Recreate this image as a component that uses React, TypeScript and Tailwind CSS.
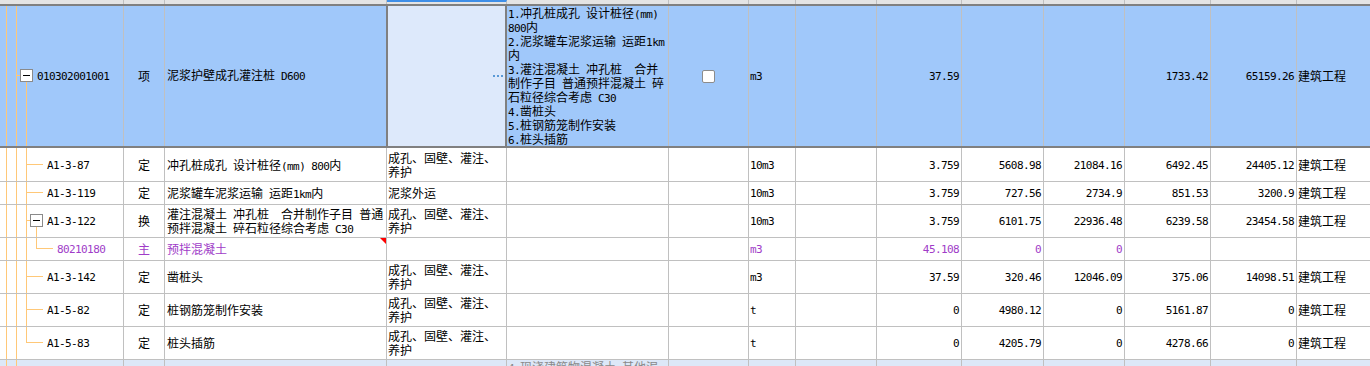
import React from "react";

const ASCII = "[font-family:'DejaVu_Sans_Mono',monospace] text-[11px] tracking-[-0.6px]";

const W = [
  "w-[124px]",
  "w-[41px]",
  "w-[222px]",
  "w-[120px]",
  "w-[162px]",
  "w-[80px]",
  "w-[47px]",
  "w-[81px]",
  "w-[85px]",
  "w-[82px]",
  "w-[81px]",
  "w-[86px]",
  "w-[86px]",
  "flex-1",
];

function T({ s }: { s: string }) {
  const parts = s.match(/[\x20-\x7e]+|[^\x20-\x7e]+/g) || [];
  return (
    <span className="whitespace-pre">
      {parts.map((p, i) =>
        /^[\x20-\x7e]/.test(p) ? (
          <span key={i} className={ASCII}>
            {p}
          </span>
        ) : (
          <span key={i}>{p}</span>
        )
      )}
    </span>
  );
}

function Lines({ lines }: { lines: string[] }) {
  return (
    <div className="flex flex-col">
      {lines.map((l, i) => (
        <div key={i} className="whitespace-pre h-[14px] leading-[14px]">
          <T s={l} />
        </div>
      ))}
    </div>
  );
}

type TK = "root" | "child" | "last" | "parent" | "sub" | "none";

function Tree({ kind, h, w }: { kind: TK; h: number; w: number }) {
  const m = Math.floor((h - 1) / 2) + 0.5;
  const O = "#ffc878";
  const els: React.ReactNode[] = [];
  const L = (x1: number, y1: number, x2: number, y2: number, c: string = O) =>
    els.push(
      <line
        key={els.length}
        x1={x1}
        y1={y1}
        x2={x2}
        y2={y2}
        stroke={c}
        strokeWidth={1}
        shapeRendering="crispEdges"
      />
    );
  const box = (x: number) => {
    els.push(
      <rect
        key={els.length}
        x={x + 0.5}
        y={m - 6}
        width={12}
        height={12}
        fill="#ffffff"
        stroke="#8a8a8a"
        shapeRendering="crispEdges"
      />
    );
    L(x + 3, m, x + 10, m, "#000000");
  };
  L(6.5, 0, 6.5, h);
  L(16.5, 0, 16.5, h);
  if (kind === "root") {
    L(16, m, 20, m);
    L(26.5, m + 6.5, 26.5, h);
    box(20);
  } else if (kind === "child") {
    L(26.5, 0, 26.5, h);
    L(26, m, 43, m);
  } else if (kind === "last") {
    L(26.5, 0, 26.5, m);
    L(26, m, 43, m);
  } else if (kind === "parent") {
    L(26.5, 0, 26.5, h);
    L(26, m, 30, m);
    L(36.5, m + 6.5, 36.5, h);
    box(30);
  } else if (kind === "sub") {
    L(26.5, 0, 26.5, h);
    L(36.5, 0, 36.5, m);
    L(36, m, 53, m);
  }
  return (
    <svg width={w} height={h} className="shrink-0 block">
      {els}
    </svg>
  );
}

function C({
  i,
  className = "",
  dark = false,
  children,
}: {
  i: number;
  className?: string;
  dark?: boolean;
  children?: React.ReactNode;
}) {
  const b =
    i === 13 ? "" : dark ? "border-r border-[#808080]" : "border-r border-[#c0c0c0]";
  return (
    <div className={`${W[i]} shrink-0 h-full flex overflow-hidden relative ${b} ${className}`}>
      {children}
    </div>
  );
}

const WORK = ["成孔、固壁、灌注、", "养护"];

type RowData = {
  hc: string;
  h: number;
  tree: TK;
  code: string;
  type: string;
  name: string[];
  work: string[];
  unit: string;
  n: string[];
  pro: string;
  purple?: boolean;
  tri?: boolean;
};

const rows: RowData[] = [
  {
    hc: "h-[34px]",
    h: 33,
    tree: "child",
    code: "A1-3-87",
    type: "定",
    name: ["冲孔桩成孔 设计桩径(mm) 800内"],
    work: WORK,
    unit: "10m3",
    n: ["3.759", "5608.98", "21084.16", "6492.45", "24405.12"],
    pro: "建筑工程",
  },
  {
    hc: "h-[23px]",
    h: 22,
    tree: "child",
    code: "A1-3-119",
    type: "定",
    name: ["泥浆罐车泥浆运输 运距1km内"],
    work: ["泥浆外运"],
    unit: "10m3",
    n: ["3.759", "727.56", "2734.9", "851.53", "3200.9"],
    pro: "建筑工程",
  },
  {
    hc: "h-[33px]",
    h: 32,
    tree: "parent",
    code: "A1-3-122",
    type: "换",
    name: ["灌注混凝土 冲孔桩  合并制作子目 普通", "预拌混凝土 碎石粒径综合考虑 C30"],
    work: WORK,
    unit: "10m3",
    n: ["3.759", "6101.75", "22936.48", "6239.58", "23454.58"],
    pro: "建筑工程",
  },
  {
    hc: "h-[23px]",
    h: 22,
    tree: "sub",
    code: "80210180",
    type: "主",
    name: ["预拌混凝土"],
    work: [],
    unit: "m3",
    n: ["45.108", "0", "0", "", ""],
    pro: "",
    purple: true,
    tri: true,
  },
  {
    hc: "h-[33px]",
    h: 32,
    tree: "child",
    code: "A1-3-142",
    type: "定",
    name: ["凿桩头"],
    work: WORK,
    unit: "m3",
    n: ["37.59", "320.46", "12046.09", "375.06", "14098.51"],
    pro: "建筑工程",
  },
  {
    hc: "h-[33px]",
    h: 32,
    tree: "child",
    code: "A1-5-82",
    type: "定",
    name: ["桩钢筋笼制作安装"],
    work: WORK,
    unit: "t",
    n: ["0", "4980.12", "0", "5161.87", "0"],
    pro: "建筑工程",
  },
  {
    hc: "h-[33px]",
    h: 32,
    tree: "last",
    code: "A1-5-83",
    type: "定",
    name: ["桩头插筋"],
    work: WORK,
    unit: "t",
    n: ["0", "4205.79", "0", "4278.66", "0"],
    pro: "建筑工程",
  },
];

const DESC = [
  "1.冲孔桩成孔 设计桩径(mm)",
  "800内",
  "2.泥浆罐车泥浆运输 运距1km",
  "内",
  "3.灌注混凝土 冲孔桩  合并",
  "制作子目 普通预拌混凝土 碎",
  "石粒径综合考虑 C30",
  "4.凿桩头",
  "5.桩钢筋笼制作安装",
  "6.桩头插筋",
];

function Row({ r }: { r: RowData }) {
  const col = r.purple ? "text-[#a03cc8]" : "";
  const num = "items-center justify-end pr-[2px]";
  return (
    <div className={`flex ${r.hc} border-b border-[#c0c0c0] bg-white ${col}`}>
      <C i={0}>
        <Tree kind={r.tree} h={r.h} w={r.tree === "sub" ? 57 : 47} />
        <div className="flex items-center">
          <T s={r.code} />
        </div>
      </C>
      <C i={1} className="items-center justify-center">
        {r.type}
      </C>
      <C i={2} className="items-center pl-[2px]">
        <Lines lines={r.name} />
        {r.tri && (
          <div className="absolute right-0 top-0 w-0 h-0 border-t-[6px] border-l-[6px] border-t-[#ff0000] border-l-transparent" />
        )}
      </C>
      <C i={3} className="items-center pl-[1px]">
        <Lines lines={r.work} />
      </C>
      <C i={4} />
      <C i={5} />
      <C i={6} className="items-center pl-[1px]">
        <T s={r.unit} />
      </C>
      <C i={7} />
      {r.n.map((v, k) => (
        <C key={k} i={8 + k} className={num}>
          <T s={v} />
        </C>
      ))}
      <C i={13} className="items-center pl-[1px]">
        {r.pro}
      </C>
    </div>
  );
}

export default function App() {
  const num = "items-center justify-end pr-[2px]";
  return (
    <div className="w-[1370px] h-[366px] overflow-hidden bg-white text-black text-[12px] leading-[14px] [font-family:'Noto_Sans_CJK_SC',sans-serif]">
      {/* header strip */}
      <div className="flex h-[4px]">
        {W.map((w, i) => (
          <div
            key={i}
            className={`${w} shrink-0 h-full bg-[#e4e4e4] ${
              i < 13 ? "border-r border-[#c0c0c0]" : ""
            } ${i === 3 ? "border-t-2 border-t-[#3f8fe8]" : ""}`}
          />
        ))}
      </div>

      {/* selected row */}
      <div className="flex h-[144px] border-y-2 border-[#808080] bg-[#a0c8fa]">
        <C i={0}>
          <Tree kind="root" h={140} w={37} />
          <div className="flex items-center">
            <T s="010302001001" />
          </div>
        </C>
        <C i={1} className="items-center justify-center">
          项
        </C>
        <C i={2} dark className="items-center pl-[2px]">
          <T s="泥浆护壁成孔灌注桩 D600" />
        </C>
        <C
          i={3}
          dark
          className="items-center justify-end pr-[3px] bg-[#dde9fb] shadow-[inset_1px_0_0_#808080,inset_-1px_0_0_#808080]"
        >
          <div className="flex gap-[2px]">
            <div className="w-[2px] h-[2px] bg-[#5a9ad6]" />
            <div className="w-[2px] h-[2px] bg-[#5a9ad6]" />
            <div className="w-[2px] h-[2px] bg-[#5a9ad6]" />
          </div>
        </C>
        <C i={4} className="items-start pl-[1px]">
          <Lines lines={DESC} />
        </C>
        <C i={5} className="items-center justify-center">
          <div className="w-[13px] h-[13px] bg-white border border-[#8c8c8c] rounded-[2px]" />
        </C>
        <C i={6} className="items-center pl-[1px]">
          <T s="m3" />
        </C>
        <C i={7} />
        <C i={8} className={num}>
          <T s="37.59" />
        </C>
        <C i={9} />
        <C i={10} />
        <C i={11} className={num}>
          <T s="1733.42" />
        </C>
        <C i={12} className={num}>
          <T s="65159.26" />
        </C>
        <C i={13} className="items-center pl-[1px]">
          建筑工程
        </C>
      </div>

      {rows.map((r, i) => (
        <Row key={i} r={r} />
      ))}

      {/* next (partially visible) row */}
      <div className="flex h-[20px] bg-[#dde8f8]">
        <C i={0}>
          <Tree kind="none" h={20} w={47} />
        </C>
        <C i={1} />
        <C i={2} />
        <C i={3} />
        <C i={4} className="items-start pl-[1px] text-[#8a8a8a]">
          <Lines lines={["4.现浇建筑物混凝土 其他泥"]} />
        </C>
        <C i={5} />
        <C i={6} />
        <C i={7} />
        <C i={8} />
        <C i={9} />
        <C i={10} />
        <C i={11} />
        <C i={12} />
        <C i={13} />
      </div>
    </div>
  );
}
